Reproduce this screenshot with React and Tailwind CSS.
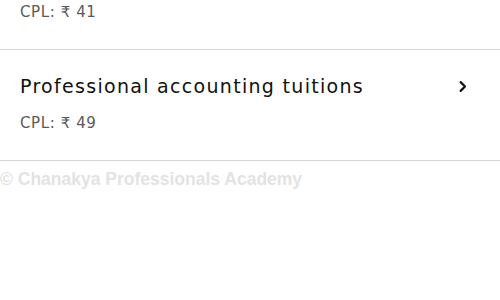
import React from 'react';

const items = [{ title: 'Professional accounting tuitions', cpl: 49 }];

function Chevron() {
  return (
    <svg width="15" height="15" viewBox="0 0 24 24" fill="none" stroke="#111" strokeWidth="3.4" strokeLinecap="round" strokeLinejoin="round">
      <path d="M9 5l7 7-7 7" />
    </svg>
  );
}

function Cpl({ value }) {
  return <div className="pl-5 pb-[27px] text-[15px] leading-5 tracking-[0.6px] text-[#5a5a5a]">CPL: ₹ {value}</div>;
}

export default function App() {
  return (
    <div className="w-[500px] h-[300px] overflow-hidden bg-white" style={{ fontFamily: '"DejaVu Sans", sans-serif' }}>
      {/* tail of the row scrolled above */}
      <div className="border-b border-[#d4d4d4] pt-[2px]">
        <Cpl value={41} />
      </div>
      {items.map((item) => (
        <div key={item.title} className="border-b border-[#d4d4d4]">
          <div className="flex items-center justify-between pl-5 pr-[30px] pt-6 pb-[15px]">
            <span className="text-[19px] leading-6 tracking-[1.3px] text-[#111]">{item.title}</span>
            <Chevron />
          </div>
          <Cpl value={item.cpl} />
        </div>
      ))}
      <div className="pt-2 text-[17.5px] font-bold leading-5 text-[#e3e3e3]" style={{ fontFamily: '"Liberation Sans", Arial, sans-serif' }}>
        © Chanakya Professionals Academy
      </div>
    </div>
  );
}
